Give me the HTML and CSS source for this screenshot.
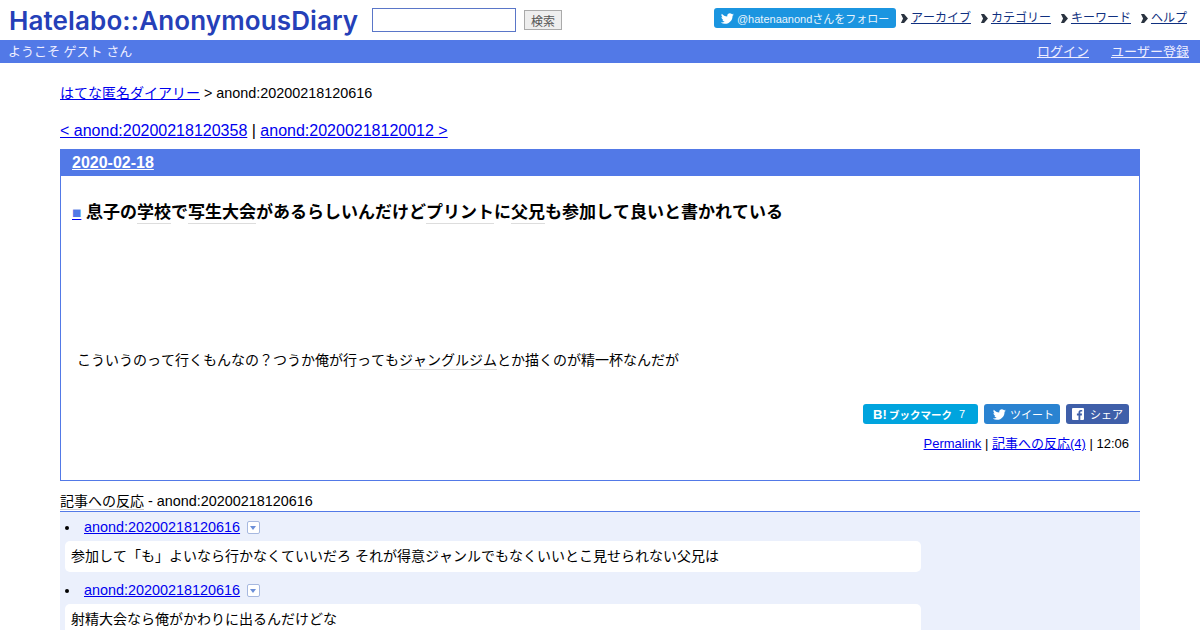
FILE: index.html
```html
<!DOCTYPE html>
<html lang="ja">
<head>
<meta charset="utf-8">
<title>anond:20200218120616</title>
<link rel="stylesheet" href="styles.css">
</head>
<body>
<header class="top">
  <div class="brand">
    <a class="logo" href="#">Hatelabo::AnonymousDiary</a>
    <form class="search"><input class="search-input" type="text"><button class="search-btn" type="button">検索</button></form>
  </div>
  <nav class="nav">
    <a class="follow" href="#"><svg class="tw" viewBox="0 0 24 24"><path d="M23.6 4.6c-.9.4-1.8.7-2.8.8 1-.6 1.8-1.6 2.2-2.7-1 .6-2 1-3.1 1.2C19 2.9 17.700 2.300 16.400 2.300c-2.700 0-4.900 2.200-4.900 4.900 0 .4 0 .8.100 1.100C7.500 8.100 3.900 6.100 1.500 3.100c-.4.700-.7 1.600-.7 2.500 0 1.700.9 3.200 2.200 4.100-.8 0-1.600-.2-2.200-.6v.1c0 2.400 1.700 4.400 3.900 4.800-.4.100-.8.200-1.300.2-.3 0-.6 0-.9-.1.600 2 2.400 3.400 4.600 3.400-1.700 1.300-3.800 2.100-6.100 2.100-.4 0-.8 0-1.200-.1 2.200 1.400 4.800 2.200 7.500 2.200 9.100 0 14-7.500 14-14v-.6c1-.7 1.800-1.600 2.500-2.500z"/></svg>@hatenaanondさんをフォロー</a>
    <a class="nav-link" href="#">アーカイブ</a>
    <a class="nav-link" href="#">カテゴリー</a>
    <a class="nav-link" href="#">キーワード</a>
    <a class="nav-link" href="#">ヘルプ</a>
  </nav>
</header>
<div class="bar">
  <span>ようこそ ゲスト さん</span>
  <span class="bar-links"><a href="#">ログイン</a><a href="#">ユーザー登録</a></span>
</div>
<main class="main">
  <p class="crumb"><a href="#">はてな匿名ダイアリー</a> <span class="lat">&gt; anond:20200218120616</span></p>
  <p class="pager"><a href="#">&lt; anond:20200218120358</a> | <a href="#">anond:20200218120012 &gt;</a></p>
  <section class="day">
    <h2 class="date"><a href="#">2020-02-18</a></h2>
    <div class="body">
      <h3 class="title"><a class="sq" href="#">■</a> <span>息子の<span class="kw">学校</span>で<span class="kw">写生大会</span>があるらしいんだけど<span class="kw">プリント</span>に<span class="kw">父兄</span>も参加して良いと書かれている</span></h3>
      <p class="text">こういうのって行くもんなの？つうか俺が行っても<span class="kw">ジャングルジム</span>とか描くのが精一杯なんだが</p>
      <div class="share">
        <a class="btn hb" href="#"><b class="hb-b">B!</b><b>ブックマーク</b><span class="hb-n">7</span></a>
        <a class="btn tw-btn" href="#"><svg class="tw" viewBox="0 0 24 24"><path d="M23.6 4.6c-.9.4-1.8.7-2.8.8 1-.6 1.8-1.6 2.2-2.7-1 .6-2 1-3.1 1.2C19 2.9 17.700 2.300 16.400 2.300c-2.700 0-4.900 2.200-4.900 4.900 0 .4 0 .8.100 1.100C7.500 8.100 3.900 6.100 1.500 3.100c-.4.700-.7 1.600-.7 2.500 0 1.700.9 3.200 2.200 4.100-.8 0-1.600-.2-2.200-.6v.1c0 2.400 1.700 4.400 3.900 4.800-.4.100-.8.200-1.300.2-.3 0-.6 0-.9-.1.600 2 2.400 3.400 4.600 3.400-1.700 1.300-3.800 2.100-6.100 2.100-.4 0-.8 0-1.200-.1 2.200 1.400 4.800 2.200 7.500 2.200 9.100 0 14-7.500 14-14v-.6c1-.7 1.800-1.600 2.500-2.500z"/></svg>ツイート</a>
        <a class="btn fb" href="#"><svg class="fb-i" viewBox="0 0 12 12"><path d="M1 0h10a1 1 0 0 1 1 1v10a1 1 0 0 1-1 1H8.300V7.400h1.500l.2-1.800H8.300V4.500c0-.5.200-.9.900-.9h1V2c-.2 0-.8-.1-1.400-.1-1.400 0-2.300.9-2.300 2.400v1.300H4.900v1.800h1.600V12H1a1 1 0 0 1-1-1V1a1 1 0 0 1 1-1z"/></svg>シェア</a>
      </div>
      <p class="meta"><a class="lat-s" href="#">Permalink</a> | <a href="#">記事への反応(4)</a> | 12:06</p>
    </div>
  </section>
  <h4 class="refs-title"><span class="kw-soft">記事への反応</span> <span class="lat">- anond:20200218120616</span></h4>
  <ul class="refs">
    <li class="ref">
      <div class="ref-head"><a class="lat" href="#">anond:20200218120616</a><span class="drop"></span></div>
      <p class="ref-body">参加して「も」よいなら行かなくていいだろ それが得意ジャンルでもなくいいとこ見せられない父兄は</p>
    </li>
    <li class="ref">
      <div class="ref-head"><a class="lat" href="#">anond:20200218120616</a><span class="drop"></span></div>
      <p class="ref-body">射精大会なら俺がかわりに出るんだけどな</p>
    </li>
  </ul>
</main>
</body>
</html>
```
FILE: styles.css
```css
html, body { margin: 0; padding: 0; height: 630px; overflow: hidden; }
body { font-family: "Liberation Sans", "Noto Sans CJK JP", sans-serif; font-size: 14px; color: #000; background: #fff; font-kerning: none; text-spacing-trim: space-all; }
a { color: #0000ee; }
p, h2, h3, h4, ul { margin: 0; padding: 0; }
.lat { font-size: 14.4px; }

.top { height: 40px; display: flex; justify-content: space-between; }
.brand { display: flex; align-items: flex-start; }
.logo { margin: 3px 0 0 9px; width: 349px; font: 600 26px/36px "Inter", sans-serif; letter-spacing: 0.12px; color: #2540b8; text-decoration: none; white-space: nowrap; }
.search { display: flex; margin: 8px 0 0 14px; }
.search-input { box-sizing: border-box; width: 144px; height: 24px; border: 1px solid #5a76c8; margin: 0; padding: 0; background: #fff; }
.search-btn { box-sizing: border-box; width: 38px; height: 20px; margin: 2px 0 0 8px; padding: 0; border: 1px solid #aaa; background: #eee; color: #555; font: 12px "Liberation Sans", "Noto Sans CJK JP", sans-serif; }

.nav { display: flex; align-items: flex-start; padding: 8px 13px 0 0; font-size: 12px; }
.follow { box-sizing: border-box; height: 20px; width: 182px; display: flex; align-items: center; padding-left: 7px; background: #1b95e0; border-radius: 3px; color: #e8f4fc; font-size: 11px; text-decoration: none; white-space: nowrap; }
.follow .tw { width: 13px; height: 13px; margin-right: 3px; fill: #fff; }
.nav-link { margin-left: 10px; padding-left: 10px; line-height: 20px; color: #103080; position: relative; }
.nav-link::before { content: ""; position: absolute; left: 0; top: 6px; width: 7px; height: 9px; background: #2a3340; clip-path: polygon(0 0, 45% 0, 100% 50%, 45% 100%, 0 100%, 30% 50%); }
.follow + .nav-link { margin-left: 5px; }

.bar { box-sizing: border-box; height: 23px; padding: 0 11px 3px 8px; display: flex; justify-content: space-between; align-items: center; background: #5279e7; color: #eef; font-size: 13px; }
.bar-links { display: flex; gap: 22px; }
.bar-links a { color: #eef; }

.main { padding: 21px 60px 0; }
.crumb { line-height: 18px; }
.pager { margin-top: 19px; font-size: 16px; line-height: 20px; }

.day { box-sizing: border-box; height: 332px; margin-top: 8px; border: 1px solid #5279e7; }
.date { height: 26px; margin: 0; padding-left: 11px; background: #5279e7; font-size: 16px; line-height: 26px; }
.date a { color: #fff; }
.body { padding: 0 10px 0 11px; }
.title { margin-top: 26px; font-size: 17px; line-height: 22px; font-weight: 700; }
.sq { color: #5279e7; text-decoration-color: #0000ee; font-size: 15.500px; }
.kw { border-bottom: 1px solid #ddd; padding-bottom: 1px; }
.text { margin: 125px 0 0 5px; line-height: 22px; }

.share { display: flex; justify-content: flex-end; gap: 6px; margin-top: 33px; }
.btn { box-sizing: border-box; height: 20px; display: flex; align-items: center; border-radius: 3px; color: #fff; font-size: 11px; text-decoration: none; white-space: nowrap; }
.hb { width: 115px; padding-left: 10px; background: #00a4de; font-size: 10.500px; }
.hb-b { width: 16px; font-size: 13px; }
.hb-n { margin-left: 7px; font-size: 11px; }
.tw-btn { width: 76px; padding-left: 9px; background: #2a83d1; }
.tw-btn .tw { width: 13px; height: 13px; margin-right: 4px; fill: #fff; }
.fb { width: 63px; padding-left: 6px; background: #3f5fa9; }
.fb-i { width: 12px; height: 12px; margin-right: 6px; fill: #fff; }
.meta { margin-top: 11px; text-align: right; font-size: 13px; line-height: 18px; }

.refs-title { margin-top: 10px; height: 20px; border-bottom: 1px solid #5279e7; font-size: 14px; font-weight: 400; line-height: 20px; }
.kw-soft { border-bottom: 1px solid #ccc; }
.refs { background: #ebf0fc; list-style: disc inside; padding: 5px 0 0 5px; height: 140px; }
.ref { margin-bottom: 8px; }
.ref-head { display: inline-flex; align-items: center; height: 20px; }
.drop { box-sizing: border-box; display: inline-block; width: 13px; height: 13px; margin-left: 7px; border: 1px solid #a6b8e0; border-radius: 2px; background: #fff; position: relative; }
.drop::after { content: ""; position: absolute; left: 2px; top: 4px; border-top: 4px solid #6c8fd8; border-left: 3.500px solid transparent; border-right: 3.500px solid transparent; }
.ref-body { box-sizing: border-box; width: 856px; height: 31px; margin-top: 4px; padding: 0 6px; background: #fff; border-radius: 5px; line-height: 31px; }
```
